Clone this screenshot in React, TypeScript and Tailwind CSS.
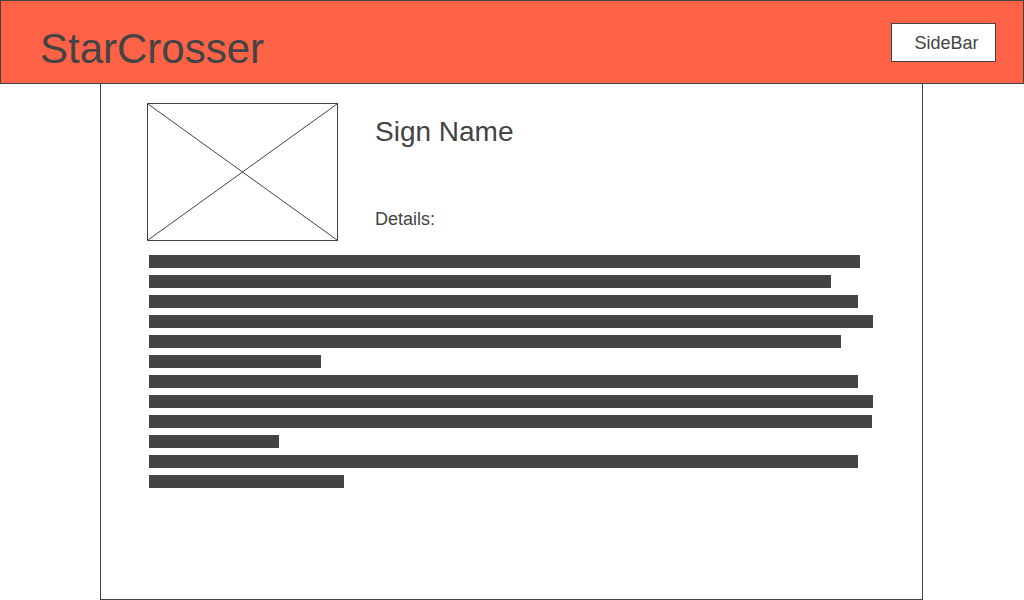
// Wireframe page: tomato header bar, then a bordered detail card with an
// image placeholder, sign name, and a stack of placeholder text lines.
const LINES = [711, 682, 709, 724, 692, 172, 709, 724, 723, 130, 709, 195]

function ImagePlaceholder() {
  return (
    <div className="h-[138px] w-[191px] shrink-0 border border-[#444]">
      <svg width="100%" height="100%" viewBox="0 0 189 136" preserveAspectRatio="none">
        <line x1="0" y1="0" x2="189" y2="136" stroke="#444" strokeWidth="1" />
        <line x1="189" y1="0" x2="0" y2="136" stroke="#444" strokeWidth="1" />
      </svg>
    </div>
  )
}

export default function App() {
  return (
    <div className="h-[600px] w-[1024px] overflow-hidden bg-white text-[#444] [font-family:'Liberation_Sans',Arial,sans-serif]">
      <header className="flex h-[84px] items-start justify-between border border-[#444] bg-[#ff6347]">
        <h1 className="mt-[24px] ml-[39px] text-[42px] leading-[48px]">StarCrosser</h1>
        <button
          type="button"
          className="mt-[22px] mr-[27px] flex h-[39px] w-[105px] items-center justify-center border border-[#444] bg-white pl-[6px] text-[18px] leading-6"
        >
          SideBar
        </button>
      </header>

      <main className="ml-[100px] h-[516px] w-[823px] border-x border-b border-[#444] pt-[19px] pl-[46px]">
        <div className="flex gap-[37px]">
          <ImagePlaceholder />
          <div className="flex flex-col">
            <h2 className="mt-[13px] text-[28px] leading-8">Sign Name</h2>
            <p className="mt-[59px] text-[18px] leading-6">Details:</p>
          </div>
        </div>

        <div className="mt-[14px] ml-[2px] flex flex-col gap-[7px]">
          {LINES.map((w, i) => (
            <div key={i} className="h-[13px] bg-[#444]" style={{ width: w }} />
          ))}
        </div>
      </main>
    </div>
  )
}
